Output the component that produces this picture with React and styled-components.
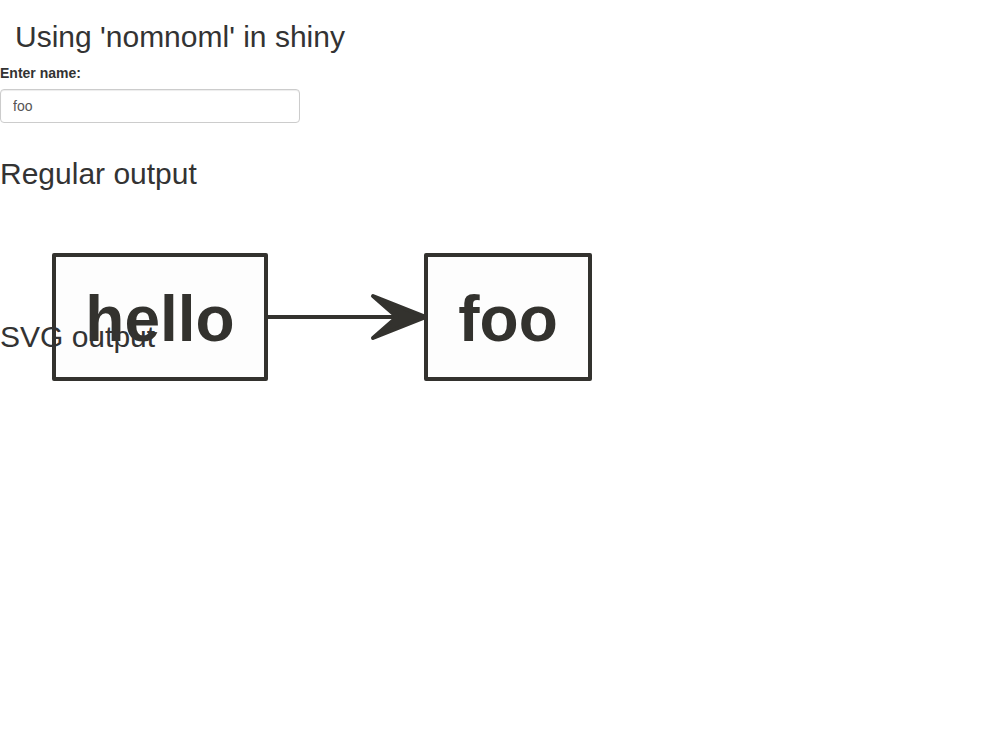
import React, { useState } from "react";
import styled, { createGlobalStyle } from "styled-components";

const GlobalStyle = createGlobalStyle`
  *, *::before, *::after { box-sizing: border-box; }
  body {
    margin: 0;
    background: #fff;
    color: #333;
    font-family: "Helvetica Neue", Helvetica, "Liberation Sans", Arial, sans-serif;
    font-size: 14px;
    line-height: 20px;
  }
`;

const Page = styled.main`
  display: flex;
  flex-direction: column;
  min-height: 100vh;
`;

const Heading = styled.h2`
  margin: 20px 0 10px;
  padding: 0 ${({ $inset }) => ($inset ? "15px" : "0")};
  font-size: 30px;
  font-weight: 500;
  line-height: 33px;
`;

const Field = styled.div`
  display: flex;
  flex-direction: column;
  gap: 6px;
  width: 300px;
  max-width: 100%;
  margin-bottom: 14px;
`;

const Label = styled.label`
  font-weight: 700;
`;

const TextInput = styled.input`
  width: 100%;
  height: 34px;
  padding: 6px 12px;
  border: 1px solid #ccc;
  border-radius: 4px;
  background: #fff;
  box-shadow: inset 0 1px 1px rgba(0, 0, 0, 0.075);
  color: #555;
  font: inherit;
`;

const Output = styled.div`
  height: 100px;
`;

const Diagram = styled.svg`
  display: block;
  overflow: visible;
`;

const DiagramText = styled.text`
  fill: #33322e;
  font-family: Helvetica, "Liberation Sans", Arial, sans-serif;
  font-size: 64px;
  font-weight: 700;
  text-anchor: middle;
`;

function NodeDiagram({ name }) {
  return (
    <Diagram width="640" height="200" viewBox="0 0 640 200" role="img" aria-label={`hello to ${name}`}>
      <g fill="#fdfdfd" stroke="#33322e" strokeWidth="4" strokeLinejoin="round" strokeLinecap="round">
        <path d="M268 117H394" fill="none" />
        <path d="M397 117L373 96L426 117L373 138Z" fill="#33322e" />
        <rect x="54" y="55" width="212" height="124" />
        <rect x="426" y="55" width="164" height="124" />
      </g>
      <DiagramText x="160" y="141">hello</DiagramText>
      <DiagramText x="508" y="141">{name}</DiagramText>
    </Diagram>
  );
}

export default function App() {
  const [name, setName] = useState("foo");
  return (
    <>
      <GlobalStyle />
      <Page>
        <Heading $inset>Using 'nomnoml' in shiny</Heading>
        <Field>
          <Label htmlFor="name">Enter name:</Label>
          <TextInput id="name" type="text" value={name} onChange={(e) => setName(e.target.value)} />
        </Field>
        <Heading>Regular output</Heading>
        <Output>
          <NodeDiagram name={name} />
        </Output>
        <Heading>SVG output</Heading>
      </Page>
    </>
  );
}
